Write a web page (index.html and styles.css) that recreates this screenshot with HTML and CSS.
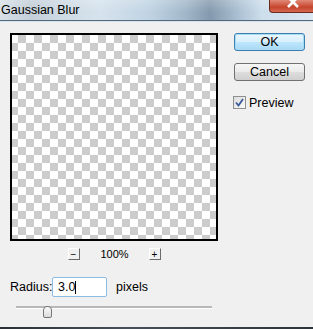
FILE: index.html
```html
<!DOCTYPE html>
<html lang="en">
<head>
  <meta charset="UTF-8">
  <title>Gaussian Blur</title>
  <link rel="stylesheet" href="styles.css">
</head>
<body>
  <div class="window">
    <!-- Title bar -->
    <div class="titlebar">
      <span class="title">Gaussian Blur</span>
      <span class="close">
        <svg width="14" height="10" viewBox="0 0 14 10"><path d="M2 -3 L12 7 M12 -3 L2 7" stroke="#fff" stroke-width="2.6" fill="none"/></svg>
      </span>
    </div>

    <div class="dialog">
      <div class="main">
        <div class="preview"></div>

        <div class="zoom-row">
          <button type="button" class="zoom-btn">&minus;</button>
          <span class="zoom-level">100%</span>
          <button type="button" class="zoom-btn">+</button>
        </div>

        <div class="radius-row">
          <label for="radius">Radius:</label>
          <div class="radius-input" id="radius">3.0<span class="caret"></span></div>
          <span class="unit">pixels</span>
        </div>

        <div class="slider">
          <div class="track"></div>
          <div class="thumb"></div>
        </div>
      </div>

      <div class="side">
        <button type="button" class="btn default">OK</button>
        <button type="button" class="btn">Cancel</button>
        <label class="check">
          <span class="box">
            <svg width="9" height="9" viewBox="0 0 9 9"><path d="M1 4.5 L3.5 7.5 L8 1" stroke="#3a5a9a" stroke-width="1.8" fill="none"/></svg>
          </span>
          Preview
        </label>
      </div>
    </div>

    <div class="frame-bottom"></div>
  </div>
</body>
</html>
```

FILE: styles.css
```css
body {
  margin: 0;
  padding: 0;
  background: #f0f0f0;
  font-family: 'Liberation Sans', Arial, sans-serif;
  font-size: 12px;
  color: #000;
}
.window {
  width: 313px;
  height: 329px;
  display: flex;
  flex-direction: column;
  overflow: hidden;
  background: #f0f0f0;
}
.titlebar {
  height: 20px;
  flex: none;
  display: flex;
  align-items: flex-start;
  border-bottom: 1px solid #55697a;
  background:
    linear-gradient(180deg, rgba(255,255,255,0.2), rgba(255,255,255,0) 60%),
    linear-gradient(90deg, #d9e1e8 0px, #c3ced8 30px, #cdd9e3 60px, #d6e3ed 100px, #bfd3e3 150px, #a2b8ca 185px, #8499ad 210px, #adc2d4 240px, #cddeec 262px, #dce8f2 313px);
}
.title {
  font-size: 12.5px;
  padding: 3px 0 0 1px;
  color: #000;
  line-height: 14px;
}
.close {
  margin-left: auto;
  margin-right: -4px;
  width: 46px;
  height: 12px;
  border: 1px solid #6b2a20;
  border-top: none;
  border-radius: 0 0 4px 4px;
  background: linear-gradient(180deg, #e08a78, #c7442c 60%, #d46a52);
  display: flex;
  justify-content: center;
  align-items: flex-start;
}
.dialog {
  flex: 1;
  display: flex;
  border-top: 1px solid #d4e3ef;
  padding-top: 11px;
}
.main {
  padding-left: 10px;
  width: 208px;
}
.preview {
  width: 204px;
  height: 204px;
  border: 2px solid #000;
  background-color: #fff;
  background-image: conic-gradient(#cccccc 25%, #fff 0 50%, #cccccc 0 75%, #fff 0);
  background-size: 16px 16px;
  background-position: -2px 0;
}
.zoom-row {
  display: flex;
  justify-content: center;
  align-items: center;
  gap: 21px;
  margin-top: 7px;
  height: 12px;
}
.zoom-btn {
  width: 12px;
  height: 12px;
  padding: 0;
  margin: 0;
  background: #f0f0f0;
  border: 1px solid;
  border-color: #fff #6a6a6a #6a6a6a #fff;
  font-family: 'Liberation Sans', Arial, sans-serif;
  font-size: 10px;
  line-height: 9px;
  color: #000;
}
.zoom-level {
  font-size: 11px;
  width: 27px;
  text-align: center;
}
.radius-row {
  display: flex;
  align-items: center;
  margin-top: 17px;
  height: 20px;
  font-size: 12.5px;
}
.radius-row label {
  width: 42px;
}
.radius-input {
  width: 55px;
  height: 20px;
  box-sizing: border-box;
  border: 1px solid #8cbbe3;
  border-radius: 2px;
  background: #fff;
  display: flex;
  align-items: center;
  padding-left: 5px;
}
.caret {
  width: 1px;
  height: 13px;
  background: #000;
}
.unit {
  margin-left: 9px;
}
.slider {
  position: relative;
  margin-top: 9px;
  margin-left: 6px;
  width: 196px;
  height: 12px;
}
.track {
  margin-top: 5px;
  height: 2px;
  background: #b8b8b8;
  border-bottom: 1px solid #fff;
}
.thumb {
  position: absolute;
  left: 27px;
  top: 0;
  width: 9px;
  height: 12px;
  box-sizing: border-box;
  border: 1px solid #777;
  border-radius: 4px 4px 2px 2px;
  background: linear-gradient(180deg, #fafafa, #dcdcdc);
}
.side {
  margin-left: 16px;
  display: flex;
  flex-direction: column;
  align-items: flex-start;
}
.btn {
  width: 71px;
  height: 18px;
  padding: 0;
  margin: 0;
  border: 1px solid #707070;
  border-radius: 3px;
  background: linear-gradient(180deg, #f6f6f6 0%, #ebebeb 48%, #dddddd 52%, #cfcfcf 100%);
  font-family: 'Liberation Sans', Arial, sans-serif;
  font-size: 12.5px;
  color: #000;
  line-height: 14px;
}
.btn + .btn {
  margin-top: 12px;
}
.btn.default {
  border-color: #3c7fb1;
  box-shadow: inset 0 0 0 1px #a8dcf5;
  background: linear-gradient(180deg, #eaf6fd 0%, #d9f0fc 48%, #bee6fd 52%, #a7d9f5 100%);
}
.check {
  display: flex;
  align-items: center;
  margin-top: 15px;
  margin-left: -1px;
  height: 13px;
  font-size: 12.5px;
}
.box {
  width: 13px;
  height: 13px;
  box-sizing: border-box;
  border: 1px solid #8e8f8f;
  background: linear-gradient(135deg, #dcdcdc, #fbfbfb);
  display: flex;
  justify-content: center;
  align-items: center;
  margin-right: 3px;
}
.frame-bottom {
  height: 2px;
  flex: none;
  background: linear-gradient(90deg, #2a2f36, #46505a 40%, #3a4048 70%, #2d333a);
}
```
